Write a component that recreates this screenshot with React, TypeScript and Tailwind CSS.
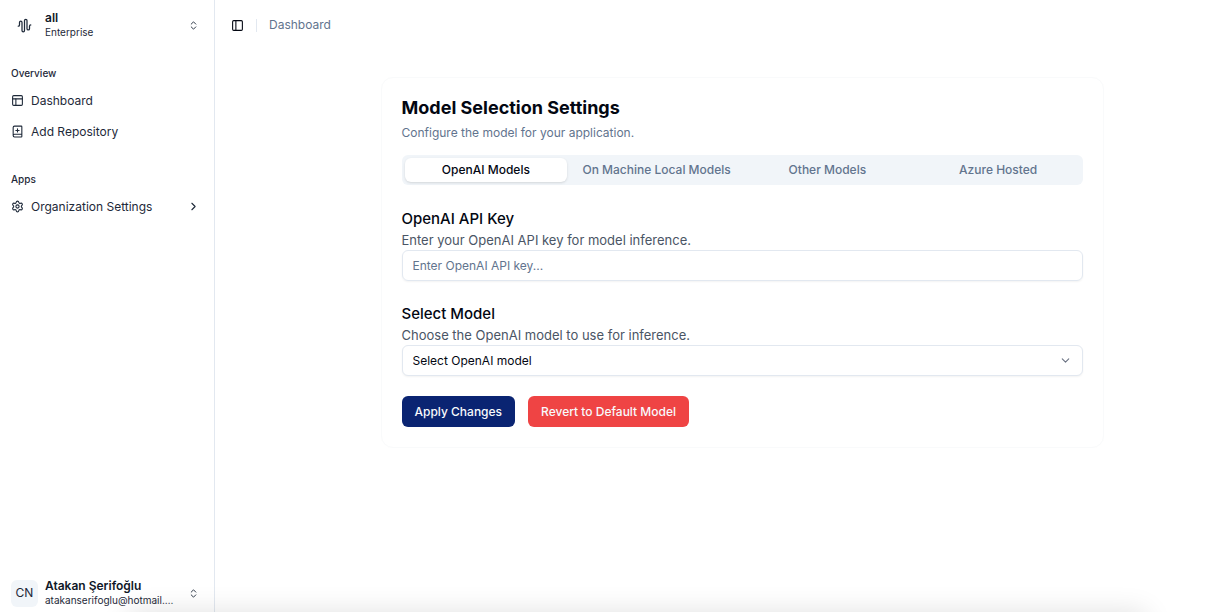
import { useState } from 'react';
import {
  AudioWaveform,
  BookPlus,
  ChevronDown,
  ChevronRight,
  ChevronsUpDown,
  PanelLeft,
  PanelsTopLeft,
  Settings,
} from 'lucide-react';

const tabs = ['OpenAI Models', 'On Machine Local Models', 'Other Models', 'Azure Hosted'];

const Sidebar = () => {
  return (
    <aside className="w-[215px] shrink-0 flex flex-col justify-between border-r border-slate-200 text-gray-800">
      <div>
        {/* Team switcher */}
        <button className="flex w-full items-center px-[11px] pt-[11px] pb-2 text-left">
          <span className="flex w-[27px] justify-center">
            <AudioWaveform size={15} />
          </span>
          <span className="ml-[7px] flex-1">
            <span className="block text-xs leading-[14px] font-semibold text-gray-900">all</span>
            <span className="block text-[10px] leading-[14px]">Enterprise</span>
          </span>
          <ChevronsUpDown size={11} className="mr-1" />
        </button>

        <nav className="px-[11px]">
          <h2 className="mt-3 h-7 flex items-center text-[10px] font-medium">Overview</h2>
          <a href="#dashboard" className="flex h-[27px] items-center gap-[7px] text-xs">
            <PanelsTopLeft size={13} />
            Dashboard
          </a>
          <a href="#add" className="mt-1 flex h-[27px] items-center gap-[7px] text-xs">
            <BookPlus size={13} />
            Add Repository
          </a>

          <h2 className="mt-5 h-7 flex items-center text-[10px] font-medium">Apps</h2>
          <button className="flex h-[27px] w-full items-center gap-[7px] text-xs">
            <Settings size={13} />
            <span className="flex-1 text-left">Organization Settings</span>
            <ChevronRight size={13} className="mr-[3px]" />
          </button>
        </nav>
      </div>

      {/* Signed in user */}
      <button className="flex items-center px-[11px] pb-[5px] text-left">
        <span className="flex size-[27px] items-center justify-center rounded-md bg-slate-100 text-xs">CN</span>
        <span className="ml-[7px] flex-1 whitespace-nowrap">
          <span className="block text-xs leading-[14px] font-semibold text-gray-900">Atakan Şerifoğlu</span>
          <span className="block text-[10px] leading-[14px]">atakanserifoglu@hotmail.…</span>
        </span>
        <ChevronsUpDown size={11} className="mr-1" />
      </button>
    </aside>
  );
};

const App = () => {
  const [active, setActive] = useState(tabs[0]);

  return (
    <div className="relative flex min-h-screen overflow-hidden bg-white font-[Inter,sans-serif] text-gray-950">
      <Sidebar />

      <div className="flex-1">
        <header className="flex h-[50px] items-center px-4">
          <button aria-label="Toggle sidebar">
            <PanelLeft size={13} />
          </button>
          <span className="mx-3 h-[13px] w-px bg-slate-200"></span>
          <a href="#dashboard" className="text-xs text-slate-500">Dashboard</a>
        </header>

        <main className="flex justify-center pt-[27px] pl-[43px]">
          <section className="w-full max-w-[723px] rounded-xl border border-gray-50 p-5">
            <h1 className="text-lg leading-[20px] font-bold">Model Selection Settings</h1>
            <p className="mt-[7px] text-xs leading-[16px] text-slate-500">Configure the model for your application.</p>

            <div role="tablist" className="mt-[14px] grid h-[30px] grid-cols-4 gap-2 rounded-md bg-slate-100 p-[3px]">
              {tabs.map((tab) => (
                <button
                  key={tab}
                  role="tab"
                  aria-selected={tab === active}
                  onClick={() => setActive(tab)}
                  className={
                    tab === active
                      ? 'rounded-md bg-white text-xs font-medium shadow-sm'
                      : 'rounded-md text-xs font-medium text-slate-500'
                  }
                >
                  {tab}
                </button>
              ))}
            </div>

            <h2 className="mt-6 text-[15px] leading-[20px] font-medium">
              <label htmlFor="api-key">OpenAI API Key</label>
            </h2>
            <p className="mt-[1px] text-[13px] leading-[20px] text-gray-600">Enter your OpenAI API key for model inference.</p>
            <input
              id="api-key"
              type="text"
              placeholder="Enter OpenAI API key..."
              className="block h-[31px] w-full rounded-md border border-slate-200 px-[10px] text-xs shadow-xs placeholder:text-slate-500"
            />

            <h2 className="mt-[23px] text-[15px] leading-[20px] font-medium">
              <label htmlFor="model">Select Model</label>
            </h2>
            <p className="mt-[1px] text-[13px] leading-[20px] text-gray-600">Choose the OpenAI model to use for inference.</p>
            <div className="relative">
              <select
                id="model"
                className="block h-[31px] w-full appearance-none rounded-md border border-slate-200 bg-white px-[10px] text-xs shadow-xs"
              >
                <option>Select OpenAI model</option>
              </select>
              <ChevronDown size={13} className="pointer-events-none absolute top-[9px] right-[11px] text-gray-500" />
            </div>

            <div className="mt-5 flex gap-[13px]">
              <button className="h-[31px] rounded-md bg-[#0a2472] px-[13px] text-xs font-medium text-slate-50">
                Apply Changes
              </button>
              <button className="h-[31px] rounded-md bg-[#ef4444] px-[13px] text-xs font-medium text-slate-50">
                Revert to Default Model
              </button>
            </div>
          </section>
        </main>
      </div>

      {/* Soft shade along the bottom edge */}
      <div className="pointer-events-none absolute top-full right-20 left-32 h-10 shadow-[0_0_28px_rgba(0,0,0,0.12)]"></div>
    </div>
  );
};

export default App;
